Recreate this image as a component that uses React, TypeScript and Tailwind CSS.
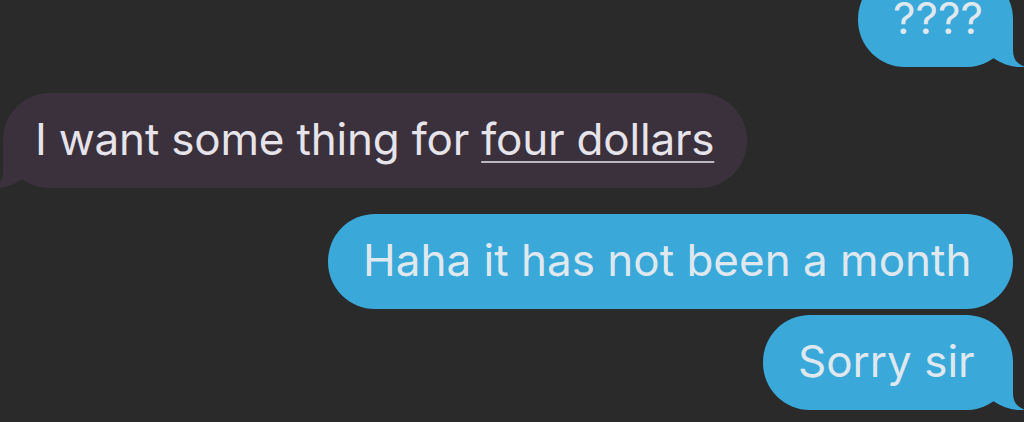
import React from "react";

const BLUE = "#3aa9d9";
const PURPLE = "#3b313c";

// bubble tail, drawn into the bottom corner of a rounded bubble
function Tail({ fill, side }: { fill: string; side: "left" | "right" }) {
  return (
    <svg
      width="64"
      height="47"
      viewBox="0 0 64 47"
      className={
        side === "right"
          ? "absolute bottom-0 right-[-14px]"
          : "absolute bottom-0 left-[-14px] -scale-x-100"
      }
    >
      <path
        d="M0 0 L50 0 L50 30 C50 40 55 45 63 47 C51 48 41 45 30 38 C22 44 12 47 0 47 Z"
        fill={fill}
      />
    </svg>
  );
}

function Sent({
  children,
  width,
  tail,
  className = "",
}: {
  children: React.ReactNode;
  width: string;
  tail?: boolean;
  className?: string;
}) {
  return (
    <div
      className={`relative mr-[11px] flex h-[95px] items-center self-end rounded-[47px] bg-[#3aa9d9] pb-[3px] pl-[35px] text-[#dfe8ef] ${width} ${className}`}
    >
      {tail ? <Tail fill={BLUE} side="right" /> : null}
      <span className="relative whitespace-nowrap">{children}</span>
    </div>
  );
}

export default function App() {
  return (
    <div className="h-[422px] w-[1024px] overflow-hidden bg-[#2a2a2b] font-[Inter,sans-serif] text-[44px] leading-none">
      <div className="-mt-[28px] flex flex-col">
        <Sent width="w-[155px]" tail>
          ????
        </Sent>

        <div className="relative ml-[3px] mt-[26px] flex h-[95px] w-[744px] items-center rounded-[47px] bg-[#3b313c] pb-[3px] pl-[32px] text-[#e6e4ea]">
          <Tail fill={PURPLE} side="left" />
          <span className="relative whitespace-nowrap tracking-[-0.2px]">
            I want some thing for{" "}
            <span className="underline decoration-[#bcb8c2] decoration-2 underline-offset-[6px]">
              four dollars
            </span>
          </span>
        </div>

        <Sent width="w-[685px]" className="mt-[26px]">
          Haha it has not been a month
        </Sent>
        <Sent width="w-[250px]" className="mt-[6px]" tail>
          Sorry sir
        </Sent>
      </div>
    </div>
  );
}
